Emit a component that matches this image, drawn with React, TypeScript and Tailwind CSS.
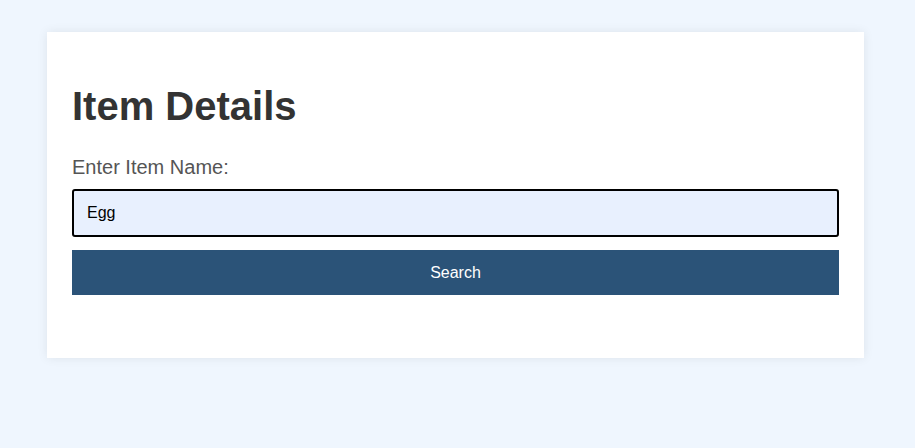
export default function App() {
  return (
    <div className="min-h-screen w-full bg-[#eff6fe] pt-8 pl-[47px] pr-[51px] font-['Liberation_Sans',Arial,sans-serif]">
      <div className="bg-white px-[25px] pt-[51px] pb-[63px] shadow-[0_0_10px_rgba(0,0,0,0.08)]">
        <h1 className="text-[40px] font-bold leading-[46px] text-[#333333] mb-[27px]">Item Details</h1>
        <label className="block text-[20px] leading-[22px] text-[#555555] mb-[11px]">Enter Item Name:</label>
        <input
          type="text"
          defaultValue="Egg"
          className="block w-full h-12 px-[13px] bg-[#e8f0fe] border-2 border-black rounded-[3px] text-base text-black outline-none"
        />
        <button className="mt-[13px] w-full h-[45px] bg-[#2b5378] text-white text-base">Search</button>
      </div>
    </div>
  );
}
